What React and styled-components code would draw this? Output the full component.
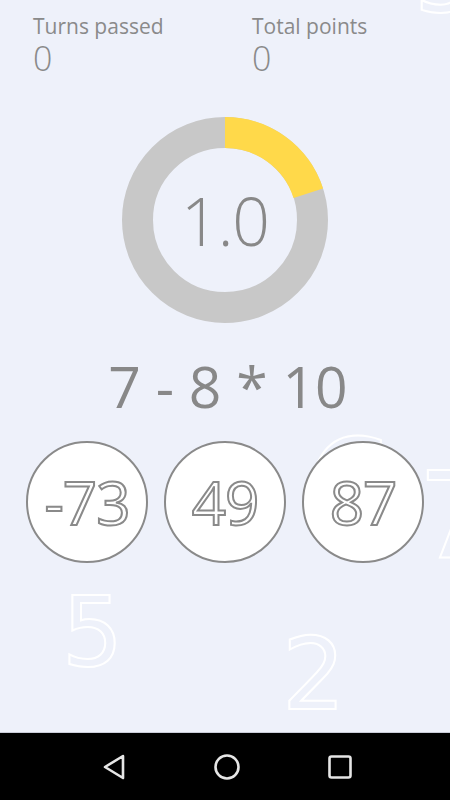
import React from "react"
import styled, { createGlobalStyle } from "styled-components"

const GlobalStyle = createGlobalStyle`
  html, body {
    margin: 0;
    padding: 0;
    background: #eef1fa;
  }
  * {
    box-sizing: border-box;
  }
`

const stats = [
  { label: "Turns passed", value: 0 },
  { label: "Total points", value: 0 },
]

const answers = ["-73", "49", "87"]

const floaters = [
  { digit: "5", x: 414, y: -72, size: 100 },
  { digit: "6", x: 302, y: 420, size: 150 },
  { digit: "7", x: 418, y: 456, size: 120 },
  { digit: "5", x: 62, y: 585, size: 96 },
  { digit: "2", x: 282, y: 625, size: 100 },
]

const progress = 0.2

const App = () => {
  const r = 87.5
  const circ = 2 * Math.PI * r
  return (
    <>
      <GlobalStyle />
      <Screen>
        <Game>
          {floaters.map((f, i) => (
            <Floater key={i} style={{ left: f.x, top: f.y, fontSize: f.size }}>
              {f.digit}
            </Floater>
          ))}
          <Stats>
            {stats.map((s) => (
              <Stat key={s.label}>
                <StatLabel>{s.label}</StatLabel>
                <StatValue>{s.value}</StatValue>
              </Stat>
            ))}
          </Stats>
          <Timer>
            <svg width="206" height="206" viewBox="0 0 206 206">
              <circle cx="103" cy="103" r={r} fill="none" stroke="#c8c8c8" strokeWidth="31" />
              <circle
                cx="103"
                cy="103"
                r={r}
                fill="none"
                stroke="#ffd94a"
                strokeWidth="31"
                strokeDasharray={`${circ * progress} ${circ}`}
                transform="rotate(-90 103 103)"
              />
            </svg>
            <Multiplier>1.0</Multiplier>
          </Timer>
          <Expression>7 - 8 * 10</Expression>
          <Answers>
            {answers.map((a) => (
              <Answer key={a}>{a}</Answer>
            ))}
          </Answers>
        </Game>
        <NavBar>
          <svg width="26" height="28" viewBox="0 0 26 28">
            <path d="M22 3 L4 14 L22 25 Z" fill="none" stroke="#e6e6e6" strokeWidth="2.6" strokeLinejoin="round" />
          </svg>
          <svg width="28" height="28" viewBox="0 0 28 28">
            <circle cx="14" cy="14" r="11.5" fill="none" stroke="#e6e6e6" strokeWidth="2.6" />
          </svg>
          <svg width="26" height="26" viewBox="0 0 26 26">
            <rect x="2.5" y="2.5" width="21" height="21" rx="2" fill="none" stroke="#e6e6e6" strokeWidth="2.6" />
          </svg>
        </NavBar>
      </Screen>
    </>
  )
}

export default App

const Screen = styled.div`
  width: 450px;
  height: 800px;
  display: flex;
  flex-direction: column;
  overflow: hidden;
  font-family: "Open Sans", "Noto Sans", sans-serif;
  color: #888888;
`

const Game = styled.div`
  position: relative;
  flex: 1;
  display: flex;
  flex-direction: column;
  align-items: center;
  overflow: hidden;
  border-bottom: 1px solid #c9ccd8;
`

const Floater = styled.span`
  position: absolute;
  line-height: 1;
  font-family: "DejaVu Sans", sans-serif;
  font-weight: 400;
  color: transparent;
  -webkit-text-stroke: 2px #ffffff;
  z-index: 0;
`

const Stats = styled.div`
  position: relative;
  z-index: 1;
  align-self: stretch;
  display: grid;
  grid-template-columns: 219px 1fr;
  padding: 12px 0 0 33px;
`

const Stat = styled.div`
  display: flex;
  flex-direction: column;
`

const StatLabel = styled.span`
  font-size: 21px;
  line-height: 28px;
  color: #8a8a8a;
`

const StatValue = styled.span`
  font-size: 34px;
  line-height: 36px;
  font-weight: 300;
  color: #8a8a8a;
`

const Timer = styled.div`
  position: relative;
  z-index: 1;
  width: 206px;
  height: 206px;
  margin-top: 41px;
  display: flex;
  align-items: center;
  justify-content: center;

  svg {
    position: absolute;
    inset: 0;
  }
`

const Multiplier = styled.span`
  position: relative;
  font-size: 66px;
  font-weight: 300;
  color: #888888;
  letter-spacing: -1px;
`

const Expression = styled.div`
  position: relative;
  z-index: 1;
  margin-top: 28px;
  font-size: 57px;
  line-height: 70px;
  font-weight: 400;
  color: #888888;
  padding-left: 6px;
`

const Answers = styled.div`
  position: relative;
  z-index: 1;
  margin-top: 20px;
  display: flex;
  gap: 16px;
`

const Answer = styled.div`
  width: 122px;
  height: 122px;
  border-radius: 50%;
  background: #ffffff;
  border: 2px solid #8a8a8a;
  display: flex;
  align-items: center;
  justify-content: center;
  font-size: 60px;
  font-weight: 400;
  color: #ffffff;
  -webkit-text-stroke: 2px #8a8a8a;
  letter-spacing: -1px;
`

const NavBar = styled.nav`
  height: 67px;
  flex-shrink: 0;
  background: #000000;
  display: flex;
  align-items: center;
  justify-content: center;
  gap: 86px;
  padding-left: 3px;
`
